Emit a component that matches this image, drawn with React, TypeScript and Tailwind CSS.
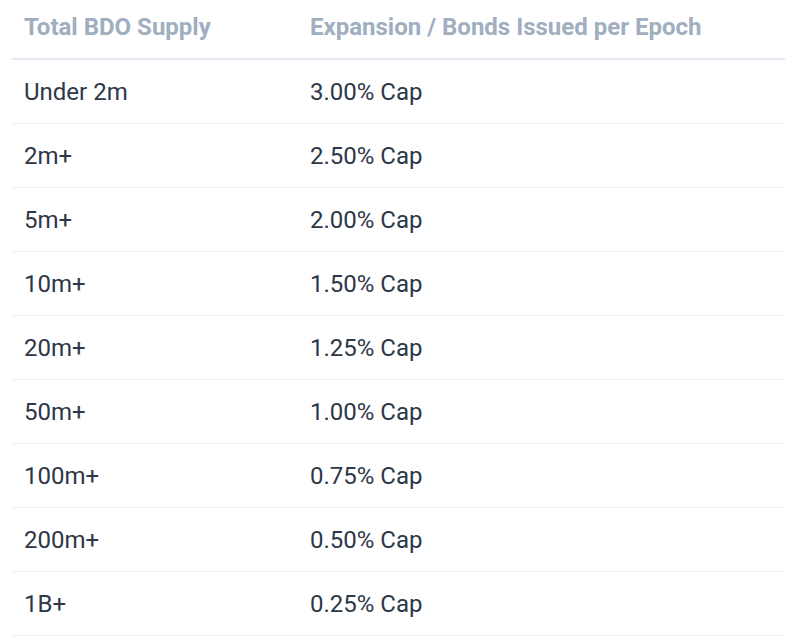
import React from "react";

const rows: [string, string][] = [
  ["Under 2m", "3.00% Cap"],
  ["2m+", "2.50% Cap"],
  ["5m+", "2.00% Cap"],
  ["10m+", "1.50% Cap"],
  ["20m+", "1.25% Cap"],
  ["50m+", "1.00% Cap"],
  ["100m+", "0.75% Cap"],
  ["200m+", "0.50% Cap"],
  ["1B+", "0.25% Cap"],
];

export default function App() {
  return (
    <div className="w-[785px] h-[643px] bg-white pl-[12px] overflow-hidden" style={{ fontFamily: "Roboto, sans-serif" }}>
      <table className="w-[773px] border-collapse text-left">
        <thead>
          <tr className="border-b-2 border-[#e2e8f0]">
            <th className="w-[286px] pl-[12px] pt-[15px] pb-[19px] text-[24px] leading-[24px] font-bold text-[#a0aec0]">Total BDO Supply</th>
            <th className="pl-[12px] pt-[15px] pb-[19px] text-[24px] leading-[24px] font-bold text-[#a0aec0]">Expansion / Bonds Issued per Epoch</th>
          </tr>
        </thead>
        <tbody>
          {rows.map(([a, b]) => (
            <tr key={a} className="border-b border-[#edf2f7]">
              <td className="pl-[12px] pt-[21px] pb-[19px] text-[24px] leading-[23px] text-[#2d3748]">{a}</td>
              <td className="pl-[12px] pt-[21px] pb-[19px] text-[24px] leading-[23px] text-[#2d3748]">{b}</td>
            </tr>
          ))}
        </tbody>
      </table>
    </div>
  );
}
